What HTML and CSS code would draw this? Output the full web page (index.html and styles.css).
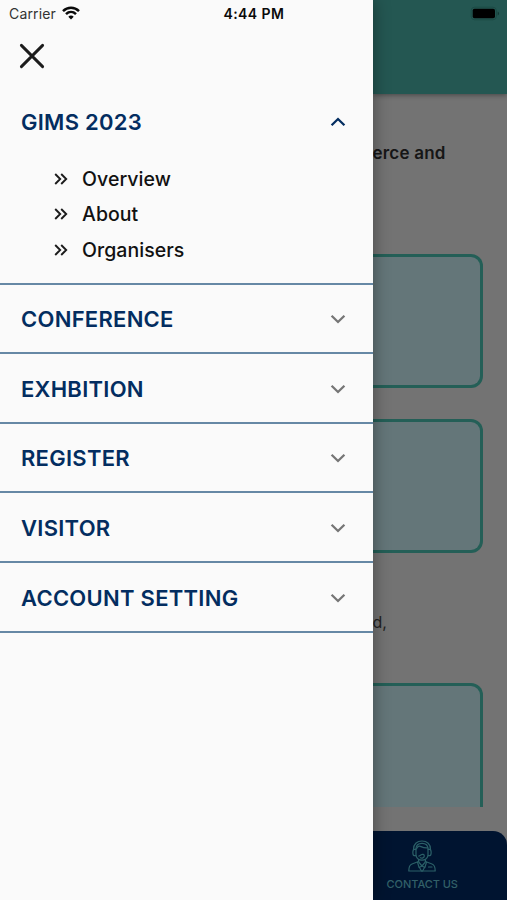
FILE: index.html
```html
<!DOCTYPE html>
<html lang="en">
<head>
  <meta charset="UTF-8">
  <title>GIMS 2023</title>
  <link rel="stylesheet" href="styles.css">
</head>
<body>
  <div class="app">

    <!-- Drawer -->
    <aside class="drawer">
      <div class="status">
        <span class="carrier">Carrier</span>
        <svg class="wifi" width="18" height="14" viewBox="0 0 18 14" fill="none" stroke="#0a0a0a" stroke-width="2.5">
          <path d="M1 5.100C5.600.6 12.400.6 17 5.100M4 8.200c2.900-2.800 7.100-2.800 10 0"/>
          <path d="M6.300 10.700c1.500-1.500 3.900-1.500 5.400 0L9 13.500z" fill="#0a0a0a" stroke="none"/>
        </svg>
        <span class="time">4:44 PM</span>
      </div>

      <div class="close">
        <svg width="26" height="26" viewBox="0 0 26 26" fill="none" stroke="#1c1c1c" stroke-width="2.9" stroke-linecap="round">
          <path d="M2.400 2.400l21.200 21.200M23.600 2.400L2.400 23.600"/>
        </svg>
      </div>

      <nav class="menu">
        <section class="group open">
          <div class="row">
            <span class="title">GIMS 2023</span>
            <svg class="arrow" viewBox="0 0 16 10"><path d="M1.600 8.300L8 2l6.400 6.300"/></svg>
          </div>
          <ul class="sub">
            <li><svg class="dbl" viewBox="0 0 14 12"><path d="M1.200 1l5 5-5 5M7.200 1l5 5-5 5"/></svg><span>Overview</span></li>
            <li><svg class="dbl" viewBox="0 0 14 12"><path d="M1.200 1l5 5-5 5M7.200 1l5 5-5 5"/></svg><span>About</span></li>
            <li><svg class="dbl" viewBox="0 0 14 12"><path d="M1.200 1l5 5-5 5M7.200 1l5 5-5 5"/></svg><span>Organisers</span></li>
          </ul>
        </section>
        <section class="group">
          <div class="row">
            <span class="title">CONFERENCE</span>
            <svg class="arrow" viewBox="0 0 16 10"><path d="M1.600 1.700L8 8l6.400-6.300"/></svg>
          </div>
        </section>
        <section class="group">
          <div class="row">
            <span class="title">EXHBITION</span>
            <svg class="arrow" viewBox="0 0 16 10"><path d="M1.600 1.700L8 8l6.400-6.300"/></svg>
          </div>
        </section>
        <section class="group">
          <div class="row">
            <span class="title">REGISTER</span>
            <svg class="arrow" viewBox="0 0 16 10"><path d="M1.600 1.700L8 8l6.400-6.300"/></svg>
          </div>
        </section>
        <section class="group">
          <div class="row">
            <span class="title">VISITOR</span>
            <svg class="arrow" viewBox="0 0 16 10"><path d="M1.600 1.700L8 8l6.400-6.300"/></svg>
          </div>
        </section>
        <section class="group">
          <div class="row">
            <span class="title">ACCOUNT SETTING</span>
            <svg class="arrow" viewBox="0 0 16 10"><path d="M1.600 1.700L8 8l6.400-6.300"/></svg>
          </div>
        </section>
      </nav>
    </aside>

    <!-- Dimmed page -->
    <main class="page">
      <header class="topbar">
        <svg width="30" height="16" viewBox="0 0 30 16">
          <rect x="1.200" y="1.200" width="25.200" height="12.600" rx="3.500" fill="none" stroke="#1c4a45"/>
          <rect x="2.700" y="2.700" width="22.300" height="9.600" rx="1.800" fill="#000"/>
          <path d="M27.700 5.500v4c1.800-.7 1.800-3.300 0-4z" fill="#143a36"/>
        </svg>
      </header>
      <div class="content">
        <p class="lead">erce and</p>
        <div class="card"></div>
        <div class="card"></div>
        <p class="text">d,</p>
        <div class="card cut"></div>
      </div>
      <footer class="tabbar">
        <svg width="28" height="32" viewBox="0 0 28 32" fill="none" stroke="#2b6068" stroke-width="1.200" stroke-linejoin="round" stroke-linecap="round">
          <path d="M5.500 9.500C5.300 4.300 9 1 14 1s8.700 3.300 8.500 8.500"/>
          <path d="M7.800 9.300C8 5.500 10.200 3.400 14 3.400s6 2.100 6.200 5.900"/>
          <path d="M8.500 8.800c1.200-2.600 2.400-3.200 4.500-2.200 2 1 4 1.500 6.800 1.300"/>
          <path d="M8 9.300H6.200c-1.800.3-1.800 6 0 6.300H8zM20 9.300h1.800c1.800.3 1.800 6 0 6.300H20z"/>
          <path d="M8 15.600c.8 2.900 2.800 4.500 6 4.500s5.200-1.600 6-4.500"/>
          <path d="M10.800 16.200c1-.2 1.800-.7 2.500-1.500 1-.8 3-.4 3 1.200 0 2-2.400 2.600-4 1.800"/>
          <path d="M10.600 19.700v2.100L14 26l3.400-4.200v-2.100"/>
          <path d="M10.600 21.500L4 24C1.800 24.800.8 27 .8 31h26.400c0-4-1-6.200-3.200-7l-6.600-2.500"/>
          <path d="M9.500 22.200l1.600 5.300L14 26l2.900 1.500 1.600-5.300M11.500 27.500L13.400 31M16.500 27.500L14.600 31M20.500 27H24"/>
        </svg>
        <span>CONTACT US</span>
      </footer>
    </main>

  </div>
</body>
</html>
```

FILE: styles.css
```css
* {
  box-sizing: border-box;
}
body {
  margin: 0;
  font-family: Inter, "Liberation Sans", sans-serif;
  background: #737373;
}
p, ul {
  margin: 0;
  padding: 0;
}
svg {
  display: block;
  flex: none;
}
.app {
  display: grid;
  grid-template-columns: 372.5px 1fr;
  width: 507px;
  height: 900px;
  overflow: hidden;
}

/* drawer */
.drawer {
  z-index: 2;
  background: #fafafa;
  box-shadow: 0 0 16px rgba(0, 0, 0, 0.38);
}
.status {
  display: flex;
  align-items: center;
  height: 27px;
  padding-left: 9px;
  color: #0a0a0a;
}
.carrier {
  width: 53px;
  font-size: 14px;
  letter-spacing: 0.15px;
  color: #333;
}
.wifi {
  margin-top: -2px;
}
.time {
  margin-left: 143.5px;
  font-size: 14px;
  font-weight: 600;
  letter-spacing: 0.4px;
}
.close {
  height: 60px;
  padding: 16px 19px;
}
.row {
  display: flex;
  align-items: center;
  justify-content: space-between;
  height: 69px;
  padding: 0 27px 0 21px;
}
.title {
  font-size: 22px;
  font-weight: 600;
  letter-spacing: 0.27px;
  line-height: 28px;
  color: #032d60;
}
.arrow {
  width: 16px;
  height: 10px;
  fill: none;
  stroke: #757575;
  stroke-width: 2.3;
}
.open .arrow {
  stroke: #032d60;
}
.group {
  height: 69.65px;
  border-bottom: 2px solid #6688a5;
}
.group.open {
  height: 197.5px;
}
.open .row {
  height: 70px;
}
.sub {
  padding: 4px 0 0 54px;
  list-style: none;
}
.sub li {
  display: flex;
  align-items: center;
  gap: 14px;
  height: 35.5px;
  font-size: 19.5px;
  font-weight: 500;
  letter-spacing: 0.05px;
  color: #111;
}
.dbl {
  width: 14px;
  height: 12px;
  fill: none;
  stroke: #1c1c1c;
  stroke-width: 1.9;
}

/* page behind */
.page {
  display: flex;
  flex-direction: column;
  height: 900px;
}
.topbar {
  z-index: 1;
  display: flex;
  justify-content: flex-end;
  height: 94px;
  padding: 6px 7px 0 0;
  background: #245752;
  box-shadow: 0 1px 5px rgba(0, 0, 0, 0.4);
}
.content {
  height: 713px;
  padding-right: 24.5px;
  overflow: hidden;
}
.lead {
  height: 160px;
  padding-top: 47px;
  font-size: 17px;
  font-weight: 600;
  line-height: 24px;
  letter-spacing: 0.2px;
  color: #161616;
}
.card {
  height: 134px;
  margin-bottom: 31px;
  background: #647679;
  border: 3px solid #245f57;
  border-left: 0;
  border-radius: 0 12px 12px 0;
}
.text {
  height: 99px;
  padding-top: 26px;
  font-size: 16px;
  line-height: 24px;
  color: #222;
}
.cut {
  height: 150px;
}
.tabbar {
  display: flex;
  flex-direction: column;
  align-items: center;
  height: 69px;
  margin-top: 24.5px;
  padding: 9px 35px 0 0;
  background: #001430;
  border-top-right-radius: 14px;
}
.tabbar span {
  margin-top: 5px;
  font-size: 11px;
  font-weight: 500;
  line-height: 15px;
  letter-spacing: -0.05px;
  white-space: nowrap;
  color: #326068;
}
```
